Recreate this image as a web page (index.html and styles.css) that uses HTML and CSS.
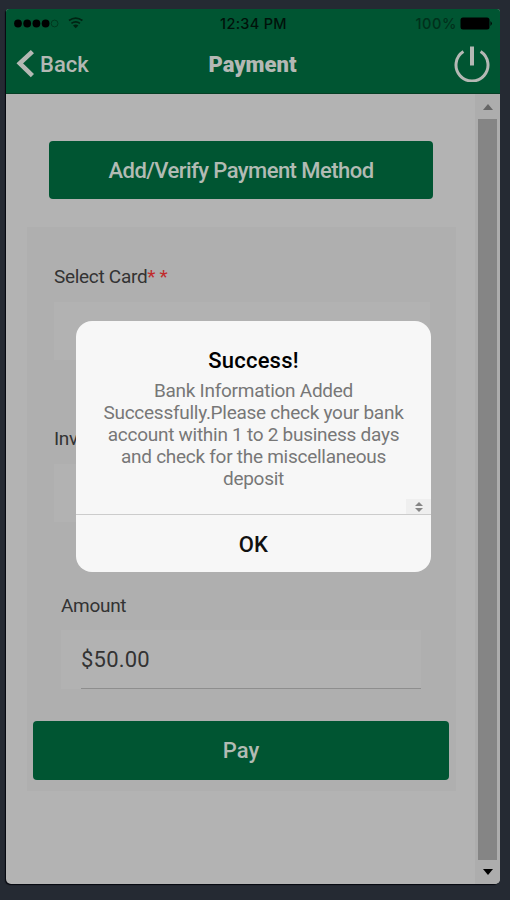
FILE: index.html
```html
<!DOCTYPE html>
<html lang="en">
<head>
<meta charset="utf-8">
<title>Payment</title>
<link rel="stylesheet" href="styles.css">
</head>
<body>
<div class="phone">
  <header class="header">
    <div class="status">
      <svg class="signal" width="72" height="16" viewBox="0 0 72 16">
        <g fill="#000"><circle cx="4" cy="8.5" r="3.9"/><circle cx="13.2" cy="8.5" r="3.9"/><circle cx="22.4" cy="8.5" r="3.9"/><circle cx="31.6" cy="8.5" r="3.9"/></g>
        <circle cx="40.6" cy="8.5" r="3.4" fill="none" stroke="#00391f" stroke-width="1"/>
        <g fill="none" stroke="#002413" stroke-width="1.8"><path d="M55 5.6Q61.7 .8 68.4 5.6"/><path d="M57.4 8.4Q61.7 5.2 66 8.4"/></g>
        <path d="M59 10.4Q61.7 8.6 64.4 10.4L61.7 13.2Z" fill="#002413"/>
      </svg>
      <span class="time">12:34 PM</span>
      <div class="power-level">
        <span class="percent">100%</span>
        <svg width="33" height="13" viewBox="0 0 33 13"><rect x=".5" y=".5" width="29" height="12" rx="2.5"/><path d="M30.5 4Q33.1 6.5 30.5 9Z"/></svg>
      </div>
    </div>
    <nav class="nav">
      <div class="back">
        <svg width="20" height="30" viewBox="0 0 20 30"><path d="M17.4 2.6 4.8 14.4 17.4 26.6" fill="none" stroke="#b4b8b4" stroke-width="4.6"/></svg>
        <span>Back</span>
      </div>
      <h1 class="title">Payment</h1>
      <svg class="logout" width="36" height="36" viewBox="0 0 36 36"><path d="M9.4 5.5A16 16 0 1 0 26.6 5.5" fill="none" stroke="#b4b8b4" stroke-width="3"/><path d="M18 .6V19.5" stroke="#b4b8b4" stroke-width="4"/></svg>
    </nav>
  </header>
  <div class="body">
    <main class="content">
      <button class="btn add">Add/Verify Payment Method</button>
      <section class="form">
        <div class="field">
          <label>Select Card<span class="req">* *</span></label>
          <div class="input"></div>
        </div>
        <div class="field invoice">
          <label>Inv</label>
          <div class="input"></div>
        </div>
        <div class="field amount">
          <label>Amount</label>
          <div class="input"><span class="value">$50.00</span></div>
        </div>
        <button class="btn pay">Pay</button>
      </section>
    </main>
    <div class="scrollbar">
      <svg width="10" height="6" viewBox="0 0 10 6"><path d="M0 6 5 0 10 6Z" fill="#666"/></svg>
      <div class="thumb"></div>
      <svg width="10" height="6" viewBox="0 0 10 6"><path d="M0 0H10L5 6Z" fill="#000"/></svg>
    </div>
  </div>
</div>
<div class="dialog">
  <div class="message">
    <h2>Success!</h2>
    <p>Bank Information Added<br>Successfully.Please check your bank<br>account within 1 to 2 business days<br>and check for the miscellaneous<br>deposit</p>
    <div class="spinner"><svg width="8" height="10" viewBox="0 0 8 10"><path d="M0 4 4 0 8 4ZM0 6H8L4 10Z" fill="#858585"/></svg></div>
  </div>
  <button class="ok">OK</button>
</div>
</body>
</html>
```
FILE: styles.css
```css
* { box-sizing: border-box; }
body {
  margin: 0;
  width: 510px;
  height: 900px;
  overflow: hidden;
  padding: 9px 10px 0 6px;
  background: #252a33;
  font-family: Roboto, sans-serif;
}
button { border: 0; padding: 0; font-family: inherit; }
.phone {
  height: 875px;
  display: flex;
  flex-direction: column;
  background: #b3b3b3;
  border-radius: 3px 3px 5px 5px;
  overflow: hidden;
  box-shadow: -1px 1px 1px #05070e;
}
.header {
  height: 85px;
  flex: none;
  background: #005532;
  border-bottom: 1px solid #063f25;
  color: #b4b8b4;
}
.status {
  height: 28px;
  padding: 0 7px 0 8px;
  display: grid;
  grid-template-columns: 1fr auto 1fr;
  align-items: center;
  color: #00120a;
  font: 500 14.5px Inter, sans-serif;
}
.time { letter-spacing: .3px; }
.power-level { display: flex; justify-content: flex-end; align-items: center; gap: 3px; }
.percent { color: #00301b; letter-spacing: .6px; }
.nav {
  height: 54px;
  display: grid;
  grid-template-columns: 1fr auto 1fr;
  align-items: center;
  padding: 0 10px 0 9px;
}
.back { display: flex; align-items: center; gap: 5px; font-size: 22px; font-weight: 500; }
.title { margin: 0; font-size: 22px; font-weight: 900; }
.logout { justify-self: end; }
.body { flex: 1; display: flex; }
.content { flex: 1; padding-top: 47px; }
.btn {
  display: block;
  background: #005532;
  border-radius: 4px;
  color: #b2bbb4;
  font-size: 22px;
  font-weight: 500;
}
.add { width: 384px; height: 58px; margin-left: 43px; letter-spacing: -.55px; }
.form {
  width: 429px;
  height: 564px;
  margin: 28px 0 0 21px;
  padding-top: 37px;
  background: #afafaf;
}
.field { margin-left: 27px; height: 162px; color: #333; }
.field label { display: block; height: 26px; line-height: 26px; font-size: 19px; letter-spacing: -.3px; }
.req { color: #c12b2b; }
.input { width: 376px; height: 58px; margin-top: 12px; background: #b2b2b2; }
.invoice { height: 166px; }
.amount { margin-left: 34px; height: 129px; }
.field.amount label { line-height: 28px; }
.amount .input { width: 360px; height: 59px; padding-left: 20px; }
.value { display: block; height: 59px; line-height: 59px; border-bottom: 1px solid #8e8e8e; font-size: 22px; letter-spacing: .2px; }
.pay { width: 416px; height: 59px; margin-left: 6px; }
.scrollbar {
  width: 25px;
  padding: 10px 0 9px;
  display: flex;
  flex-direction: column;
  align-items: center;
  gap: 9px;
  background: #adadad;
}
.thumb { flex: 1; width: 19px; background: #858585; }
.dialog {
  position: absolute;
  left: 76px;
  top: 321px;
  width: 355px;
  height: 251px;
  border-radius: 16px;
  background: #f7f7f7;
  overflow: hidden;
  text-align: center;
}
.message { height: 194px; padding-top: 26px; border-bottom: 1px solid #ccc; position: relative; }
.message h2 { margin: 0; font-size: 22px; line-height: 27px; font-weight: 500; letter-spacing: .2px; color: #000; }
.message p { margin: 6px 0 0; font-size: 19px; line-height: 21.9px; letter-spacing: -.27px; color: #777; }
.spinner {
  position: absolute;
  right: 0;
  bottom: 0;
  width: 25px;
  height: 15px;
  display: grid;
  place-items: center;
  background: #efefef;
}
.ok { width: 100%; height: 57px; padding-top: 1px; background: none; color: #111; font-size: 22px; font-weight: 500; letter-spacing: .2px; }
```
